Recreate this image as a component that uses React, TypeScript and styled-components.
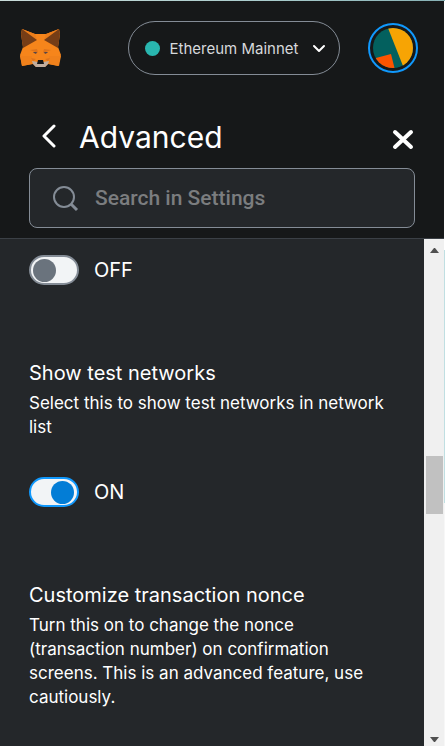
import React, { useState } from "react";
import styled, { createGlobalStyle } from "styled-components";

const Global = createGlobalStyle`
  *, *::before, *::after { box-sizing: border-box; }
  html, body, #root { height: 100%; margin: 0; }
  body { background: #161819; color: #fff; font-family: Inter, "Open Sans", sans-serif; }
  button, input { font: inherit; color: inherit; }
  h1, h2, p { margin: 0; }
`;

const Page = styled.div`
  height: 100vh;
  display: flex;
  flex-direction: column;
  padding: 1px 1px 0 0;
  background:
    linear-gradient(90deg, #c9dcda, #a9cccc 60%, #86b0b4) top / 100% 1px no-repeat,
    linear-gradient(#fff 250px, #c0dfe2 250px 503px, #f7f7f7 503px);
`;

const TopBar = styled.header`
  display: flex;
  align-items: center;
  justify-content: space-between;
  gap: 12px;
  height: 94px;
  flex: none;
  padding: 0 26px 0 20px;
  background: #161819;
`;

const IconButton = styled.button`
  display: flex;
  align-items: center;
  justify-content: center;
  flex: none;
  padding: 0;
  border: 0;
  background: none;
  cursor: pointer;
`;

const NetworkButton = styled.button`
  display: flex;
  align-items: center;
  gap: 10px;
  height: 54px;
  margin-left: 39px;
  padding: 0 13px 0 16px;
  border: 1px solid #848c96;
  border-radius: 27px;
  background: none;
  color: #d6d9dc;
  font-size: 15px;
  white-space: nowrap;
  cursor: pointer;
`;

const NetworkName = styled.span`
  padding-right: 4px;
`;

const NetworkDot = styled.span`
  width: 15px;
  height: 15px;
  border-radius: 50%;
  background: #29b6af;
`;

const SettingsHeader = styled.div`
  display: flex;
  align-items: center;
  height: 73px;
  flex: none;
  padding: 10px 30px 0 39px;
  background: #161819;
`;

const Title = styled.h1`
  flex: 1;
  padding-left: 20px;
  font-size: 30px;
  font-weight: 400;
  line-height: 40px;
`;

const SearchArea = styled.div`
  flex: none;
  padding: 0 29px 10px;
  background: #161819;
`;

const SearchBox = styled.label`
  display: flex;
  align-items: center;
  gap: 16px;
  height: 60px;
  padding: 0 22px;
  border: 1px solid #848c96;
  border-radius: 8px;
  background: #24272a;
`;

const SearchInput = styled.input`
  flex: 1;
  min-width: 0;
  padding: 0;
  border: 0;
  outline: 0;
  background: none;
  font-family: Roboto, sans-serif;
  font-size: 21px;
  font-weight: 500;
  &::placeholder { color: #7b7d7f; opacity: 1; }
`;

const Body = styled.div`
  display: flex;
  flex: 1;
  min-height: 0;
  border-top: 1px solid #3b4046;
  background: #24272a;
`;

const Settings = styled.main`
  flex: 1;
  min-width: 0;
  overflow: hidden;
  padding: 16px 29px 0;
`;

const Section = styled.section`
  padding-bottom: 74px;
`;

const SectionTitle = styled.h2`
  font-size: 20px;
  font-weight: 400;
  line-height: 28px;
`;

const Description = styled.p`
  padding: 4px 8px 38px 0;
  font-size: 17px;
  line-height: 24px;
`;

const ToggleLabel = styled.label`
  display: flex;
  align-items: center;
  gap: 15px;
  height: 30px;
  font-size: 20px;
  cursor: pointer;
`;

const Toggle = styled.input`
  appearance: none;
  display: flex;
  align-items: center;
  width: 50px;
  height: 30px;
  margin: 0;
  padding: 0 3px 0 2px;
  border: 2px solid #848c96;
  border-radius: 15px;
  background: #f2f4f6;
  cursor: pointer;
  &::before {
    content: "";
    width: 23px;
    height: 23px;
    border-radius: 50%;
    background: #6a737d;
  }
  &:checked { justify-content: flex-end; border-color: #1098fc; }
  &:checked::before { background: #037dd6; }
`;

const ScrollTrack = styled.div`
  display: flex;
  flex-direction: column;
  align-items: center;
  width: 20px;
  flex: none;
  padding: 9px 0 4px;
  background: #f0f0f0;
`;

const ScrollRun = styled.div`
  display: flex;
  flex-direction: column;
  flex: 1;
  width: 17px;
`;

const Space = styled.div<{ $grow: number }>`
  flex: ${(p) => p.$grow} 1 0;
`;

const ScrollThumb = styled.div`
  height: 58px;
  background: #c1c1c1;
`;

const Fox = () => (
  <svg width="41" height="40" viewBox="0 0 41 40" aria-hidden="true">
    <path d="M2 1 15 6h11L39 1l1 5-2 13 3 8-3 11-10-2-3 3h-9l-3-3-11 2L0 27l3-8L1 6z" fill="#f6851b" />
    <path d="M2 1 15 6l2 6zM39 1 26 6l-2 6z" fill="#ec7d1a" />
    <path d="M2 1 17 12 3 20 1 6zM39 1 24 12l14 8 2-14z" fill="#763d16" />
    <path d="M10 22 17 21 18 25zM31 22l-7-1-1 4z" fill="#dd741c" />
    <path d="m13 24 4 0-1 2-2-1zM28 24l-4 0 1 2 2-1z" fill="#594646" />
    <path d="m0 28 12 0 0 8-10 2zM41 28H29v8l10 2z" fill="#f0811b" />
    <path d="m11 30 5 1-3 2zM30 30l-5 1 3 2z" fill="#dc731c" />
    <path d="m12 33 6 1h5l6-1-1 3-3 3h-9l-3-3z" fill="#c0ad9e" />
    <path d="M18 32h5l1 4h-7z" fill="#161616" />
  </svg>
);

const Avatar = () => (
  <svg width="50" height="50" viewBox="0 0 50 50" aria-hidden="true">
    <clipPath id="avatar-clip"><circle cx="25" cy="25" r="20" /></clipPath>
    <circle cx="25" cy="25" r="24" fill="none" stroke="#1098fc" strokeWidth="2" />
    <g clipPath="url(#avatar-clip)">
      <path d="M0 0h50v50H0z" fill="#03605e" />
      <path d="M20 5 35 43 50 43V0H20z" fill="#f7a404" />
      <path d="m0 37 23-6 5 20H0z" fill="#fc5400" />
    </g>
  </svg>
);

const Stroke = ({ d, w, h, weight }: { d: string; w: number; h: number; weight: number }) => (
  <svg width={w} height={h} viewBox={`0 0 ${w} ${h}`} fill="none" stroke="#fff" strokeWidth={weight} aria-hidden="true">
    <path d={d} strokeLinecap="round" strokeLinejoin="round" />
  </svg>
);

const SettingToggle = ({ name, initial }: { name: string; initial: boolean }) => {
  const [on, setOn] = useState(initial);
  return (
    <ToggleLabel>
      <Toggle type="checkbox" role="switch" aria-label={name} checked={on} onChange={() => setOn(!on)} />
      {on ? "ON" : "OFF"}
    </ToggleLabel>
  );
};

export default function App() {
  return (
    <Page>
      <Global />
      <TopBar>
        <IconButton aria-label="Home"><Fox /></IconButton>
        <NetworkButton>
          <NetworkDot />
          <NetworkName>Ethereum Mainnet</NetworkName>
          <Stroke d="M2 2 7 7 12 2" w={14} h={9} weight={2} />
        </NetworkButton>
        <IconButton aria-label="Account menu"><Avatar /></IconButton>
      </TopBar>
      <SettingsHeader>
        <IconButton aria-label="Back"><Stroke d="M15 2 5 12 15 22" w={20} h={25} weight={3} /></IconButton>
        <Title>Advanced</Title>
        <IconButton aria-label="Close"><Stroke d="m3 8 16 15M19 8 3 23" w={22} h={26} weight={4} /></IconButton>
      </SettingsHeader>
      <SearchArea>
        <SearchBox>
          <svg width="27" height="27" viewBox="0 0 27 27" fill="none" stroke="#848c96" strokeWidth="2" aria-hidden="true">
            <circle cx="12" cy="12" r="10" />
            <path d="m19 19 6 6" strokeWidth="3" />
          </svg>
          <SearchInput placeholder="Search in Settings" aria-label="Search in Settings" />
        </SearchBox>
      </SearchArea>
      <Body>
        <Settings>
          <Section>
            <SettingToggle name="Previous setting" initial={false} />
          </Section>
          <Section>
            <SectionTitle>Show test networks</SectionTitle>
            <Description>Select this to show test networks in network list</Description>
            <SettingToggle name="Show test networks" initial />
          </Section>
          <Section>
            <SectionTitle>Customize transaction nonce</SectionTitle>
            <Description>
              Turn this on to change the nonce (transaction number) on confirmation screens. This is an advanced
              feature, use cautiously.
            </Description>
          </Section>
        </Settings>
        <ScrollTrack aria-hidden="true">
          <svg width="9" height="5" viewBox="0 0 9 5"><path d="M0 5 4 0h1l4 5z" fill="#505050" /></svg>
          <ScrollRun>
            <Space $grow={203} />
            <ScrollThumb />
            <Space $grow={223} />
          </ScrollRun>
          <svg width="9" height="5" viewBox="0 0 9 5"><path d="M0 0h9L5 5H4z" fill="#505050" /></svg>
        </ScrollTrack>
      </Body>
    </Page>
  );
}
